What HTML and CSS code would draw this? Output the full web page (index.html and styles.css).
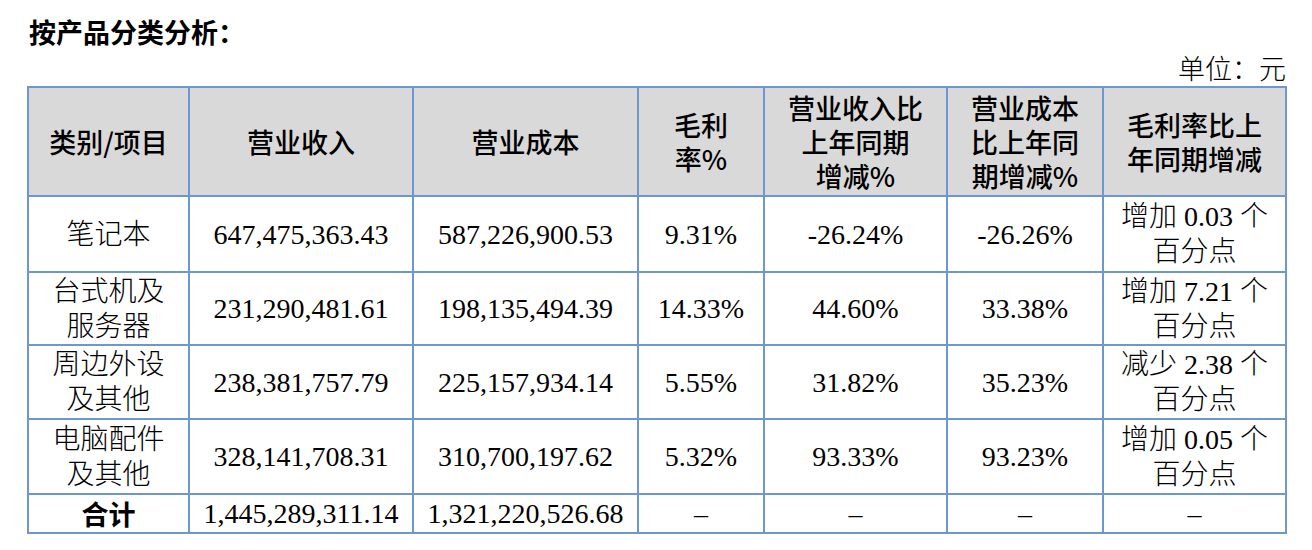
FILE: index.html
```html
<!DOCTYPE html>
<html lang="zh-CN">
<head>
<meta charset="utf-8">
<title>按产品分类分析</title>
<link rel="stylesheet" href="styles.css">
</head>
<body>
<div class="page">
  <h2 class="title">按产品分类分析：</h2>
  <div class="unit">单位：元</div>
  <table class="data">
    <colgroup>
      <col class="c1"><col class="c2"><col class="c3"><col class="c4"><col class="c5"><col class="c6"><col class="c7">
    </colgroup>
    <thead>
      <tr class="head">
        <th>类别/项目</th>
        <th>营业收入</th>
        <th>营业成本</th>
        <th>毛利<br>率%</th>
        <th>营业收入比<br>上年同期<br>增减%</th>
        <th>营业成本<br>比上年同<br>期增减%</th>
        <th>毛利率比上<br>年同期增减</th>
      </tr>
    </thead>
    <tbody>
      <tr class="r1">
        <td>笔记本</td>
        <td>647,475,363.43</td>
        <td>587,226,900.53</td>
        <td>9.31%</td>
        <td>-26.24%</td>
        <td>-26.26%</td>
        <td>增加 0.03 个<br>百分点</td>
      </tr>
      <tr class="r2">
        <td>台式机及<br>服务器</td>
        <td>231,290,481.61</td>
        <td>198,135,494.39</td>
        <td>14.33%</td>
        <td>44.60%</td>
        <td>33.38%</td>
        <td>增加 7.21 个<br>百分点</td>
      </tr>
      <tr class="r3">
        <td>周边外设<br>及其他</td>
        <td>238,381,757.79</td>
        <td>225,157,934.14</td>
        <td>5.55%</td>
        <td>31.82%</td>
        <td>35.23%</td>
        <td>减少 2.38 个<br>百分点</td>
      </tr>
      <tr class="r4">
        <td>电脑配件<br>及其他</td>
        <td>328,141,708.31</td>
        <td>310,700,197.62</td>
        <td>5.32%</td>
        <td>93.33%</td>
        <td>93.23%</td>
        <td>增加 0.05 个<br>百分点</td>
      </tr>
      <tr class="total">
        <td class="label">合计</td>
        <td>1,445,289,311.14</td>
        <td>1,321,220,526.68</td>
        <td>–</td>
        <td>–</td>
        <td>–</td>
        <td>–</td>
      </tr>
    </tbody>
  </table>
</div>
</body>
</html>
```

FILE: styles.css
```css
html, body {
  margin: 0;
  padding: 0;
  background: #ffffff;
}

.page {
  padding: 14px 0 0 0;
  width: 1312px;
  color: #000000;
  font-family: "Liberation Serif", "Noto Sans CJK SC", serif;
  font-size: 28px;
}

.title {
  margin: 0 0 0 29px;
  font-family: "Noto Sans CJK SC", sans-serif;
  font-weight: 700;
  font-size: 27px;
  line-height: 36px;
  height: 36px;
}

.unit {
  width: 1286px;
  text-align: right;
  font-family: "Noto Sans CJK SC", sans-serif;
  font-weight: 300;
  font-size: 27px;
  line-height: 36px;
  height: 36px;
}

.data {
  margin-left: 27px;
  width: 1260px;
  border-collapse: collapse;
  table-layout: fixed;
}

.c1 { width: 161px; }
.c2 { width: 224px; }
.c3 { width: 225px; }
.c4 { width: 126px; }
.c5 { width: 183px; }
.c6 { width: 156px; }
.c7 { width: 183px; }

.data th,
.data td {
  border: 2px solid #6e97cf;
  padding: 0;
  text-align: center;
  vertical-align: middle;
  overflow: hidden;
  white-space: nowrap;
}

.data th {
  background: #d9d9d9;
  font-family: "Noto Sans CJK SC", sans-serif;
  font-weight: 500;
  font-size: 27px;
  line-height: 34px;
}

.data td {
  font-family: "Liberation Serif", "Noto Sans CJK SC", serif;
  font-weight: 300;
  font-size: 28px;
  line-height: 35px;
}

.head th { height: 107px; }
.r1 td { height: 74px; }
.r2 td { height: 71px; }
.r3 td { height: 72px; }
.r4 td { height: 73px; }
.total td { height: 37px; line-height: 34px; }

.total .label {
  font-family: "Noto Sans CJK SC", sans-serif;
  font-weight: 700;
  font-size: 27px;
}
```
